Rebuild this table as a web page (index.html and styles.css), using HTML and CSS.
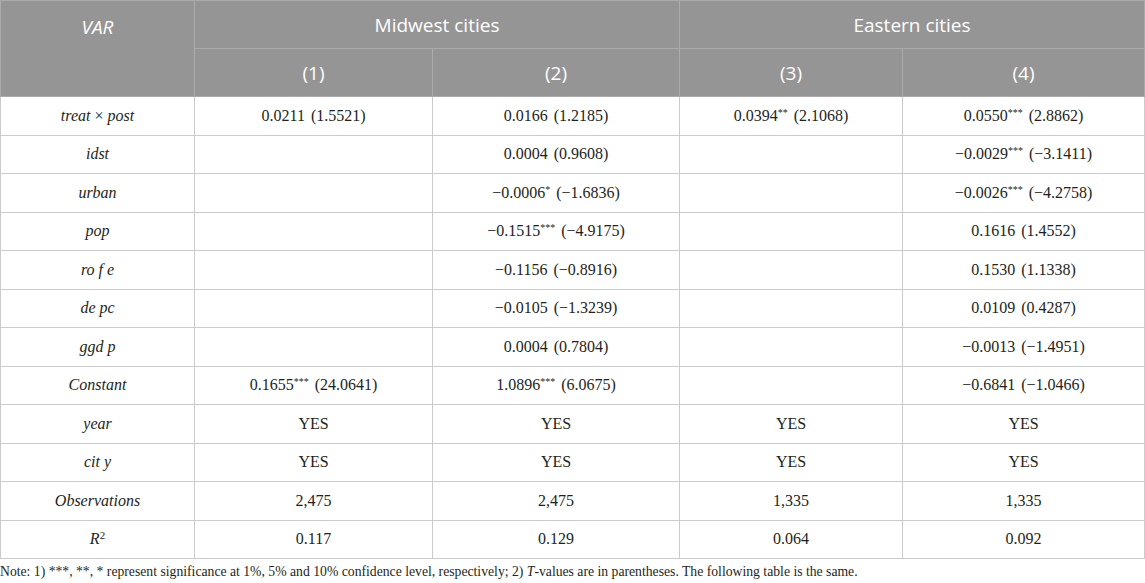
FILE: index.html
```html
<!DOCTYPE html>
<html lang="en">
<head>
  <meta charset="UTF-8" />
  <title>Heterogeneity by region</title>
  <link rel="stylesheet" href="styles.css">
</head>
<body>

  <!-- Regression table -->
  <table class="reg-table">
    <colgroup>
      <col class="c-var">
      <col class="c1">
      <col class="c2">
      <col class="c3">
      <col class="c4">
    </colgroup>
    <thead>
      <tr>
        <th rowspan="2" class="var-head"><i>VAR</i></th>
        <th colspan="2">Midwest cities</th>
        <th colspan="2">Eastern cities</th>
      </tr>
      <tr>
        <th>(1)</th>
        <th>(2)</th>
        <th>(3)</th>
        <th>(4)</th>
      </tr>
    </thead>
    <tbody>
      <tr>
        <td class="name"><i>treat</i> × <i>post</i></td>
        <td>0.0211 (1.5521)</td>
        <td>0.0166 (1.2185)</td>
        <td>0.0394<sup>**</sup> (2.1068)</td>
        <td>0.0550<sup>***</sup> (2.8862)</td>
      </tr>
      <tr>
        <td class="name"><i>idst</i></td>
        <td></td>
        <td>0.0004 (0.9608)</td>
        <td></td>
        <td>−0.0029<sup>***</sup> (−3.1411)</td>
      </tr>
      <tr>
        <td class="name"><i>urban</i></td>
        <td></td>
        <td>−0.0006<sup>*</sup> (−1.6836)</td>
        <td></td>
        <td>−0.0026<sup>***</sup> (−4.2758)</td>
      </tr>
      <tr>
        <td class="name"><i>pop</i></td>
        <td></td>
        <td>−0.1515<sup>***</sup> (−4.9175)</td>
        <td></td>
        <td>0.1616 (1.4552)</td>
      </tr>
      <tr>
        <td class="name"><i>ro f e</i></td>
        <td></td>
        <td>−0.1156 (−0.8916)</td>
        <td></td>
        <td>0.1530 (1.1338)</td>
      </tr>
      <tr>
        <td class="name"><i>de pc</i></td>
        <td></td>
        <td>−0.0105 (−1.3239)</td>
        <td></td>
        <td>0.0109 (0.4287)</td>
      </tr>
      <tr>
        <td class="name"><i>ggd p</i></td>
        <td></td>
        <td>0.0004 (0.7804)</td>
        <td></td>
        <td>−0.0013 (−1.4951)</td>
      </tr>
      <tr>
        <td class="name"><i>Constant</i></td>
        <td>0.1655<sup>***</sup> (24.0641)</td>
        <td>1.0896<sup>***</sup> (6.0675)</td>
        <td></td>
        <td>−0.6841 (−1.0466)</td>
      </tr>
      <tr>
        <td class="name"><i>year</i></td>
        <td>YES</td>
        <td>YES</td>
        <td>YES</td>
        <td>YES</td>
      </tr>
      <tr>
        <td class="name"><i>cit y</i></td>
        <td>YES</td>
        <td>YES</td>
        <td>YES</td>
        <td>YES</td>
      </tr>
      <tr>
        <td class="name"><i>Observations</i></td>
        <td>2,475</td>
        <td>2,475</td>
        <td>1,335</td>
        <td>1,335</td>
      </tr>
      <tr>
        <td class="name"><i>R</i><sup class="sq">2</sup></td>
        <td>0.117</td>
        <td>0.129</td>
        <td>0.064</td>
        <td>0.092</td>
      </tr>
    </tbody>
  </table>

  <p class="note">Note: 1) ***, **, * represent significance at 1%, 5% and 10% confidence level, respectively; 2) <i>T</i>-values are in parentheses. The following table is the same.</p>

</body>
</html>
```

FILE: styles.css
```css
body {
  margin: 0;
  background: #ffffff;
  color: #231f20;
  font-family: "Liberation Serif", "DejaVu Serif", serif;
}

/* Table */
.reg-table {
  width: 1144px;
  border-collapse: collapse;
  table-layout: fixed;
}

.c-var { width: 194px; }
.c1 { width: 238px; }
.c2 { width: 247px; }
.c3 { width: 223px; }
.c4 { width: 242px; }

.reg-table th {
  height: 47px;
  padding: 0;
  background: #959595;
  color: #ffffff;
  font-family: "Open Sans", "Liberation Sans", sans-serif;
  font-weight: normal;
  font-size: 19px;
  text-align: center;
  border: 1px solid #aaaaaa;
}

.reg-table th.var-head {
  vertical-align: top;
  padding-top: 13px;
}

.reg-table td {
  height: 37.5px;
  padding: 0;
  text-align: center;
  font-size: 16px;
  word-spacing: 2px;
  border: 1px solid #cbcbcb;
}

.reg-table td.name {
  word-spacing: 0;
}

.reg-table sup {
  font-size: 10px;
  vertical-align: 5px;
  line-height: 0;
  word-spacing: 0;
}

.reg-table sup.sq {
  font-size: 11px;
}

/* Note */
.note {
  margin: 5px 0 0 0;
  font-size: 13.7px;
  white-space: nowrap;
}
```
